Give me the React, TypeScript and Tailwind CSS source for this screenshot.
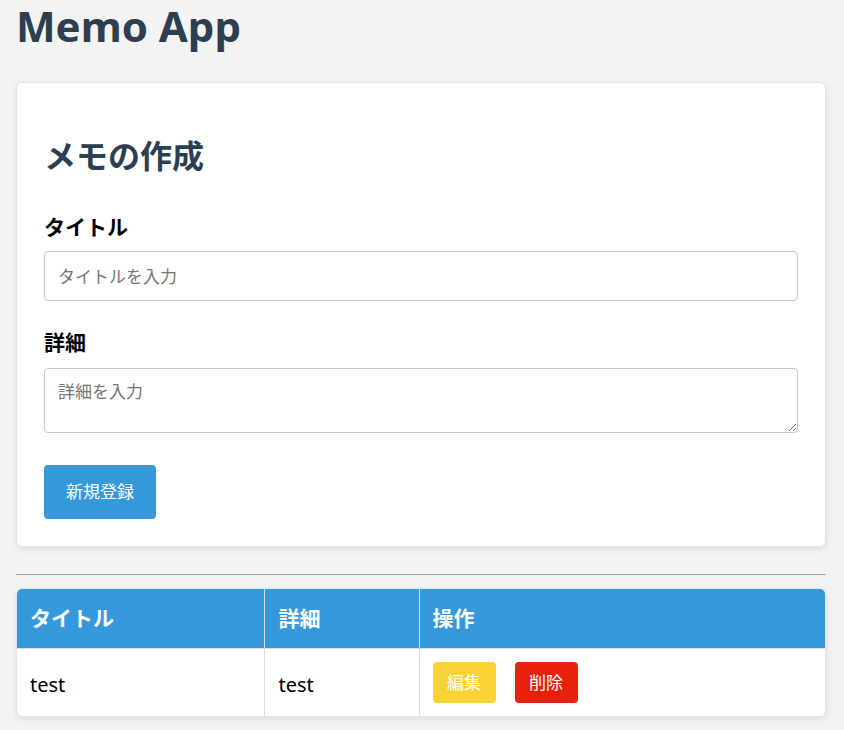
import React, { useState } from "react";

type Memo = { title: string; detail: string };

const font = { fontFamily: '"Noto Sans", "Noto Sans CJK JP", sans-serif' };

export default function App() {
    const [memos] = useState<Memo[]>([{ title: "test", detail: "test" }]);

    return (
        <div className="min-h-[730px] bg-[#f3f3f3] pb-10" style={font}>
            <div className="w-[810px] ml-4">
                <h1 className="text-[42px] leading-[52px] font-bold text-[#2c3e50] mb-[30px]">Memo App</h1>

                {/* create form */}
                <div className="bg-white border border-[#e4e4e4] rounded-md shadow-[0_2px_6px_rgba(0,0,0,0.1)] px-[27px] pt-[54px] pb-[27px]">
                    <h2 className="text-[32px] leading-[38px] font-bold text-[#2c3e50] mb-[38px]">メモの作成</h2>

                    <label className="block text-[21px] leading-[28px] font-bold text-black mb-[10px]">タイトル</label>
                    <input
                        type="text"
                        placeholder="タイトルを入力"
                        className="block w-full h-[50px] border border-[#c8c8c8] rounded px-[13px] text-[17px] text-black placeholder:text-[#757575] outline-none"
                    />

                    <label className="block text-[21px] leading-[28px] font-bold text-black mt-[27px] mb-[12px]">詳細</label>
                    <textarea
                        placeholder="詳細を入力"
                        className="block w-full h-[65px] border border-[#c8c8c8] rounded px-[13px] pt-[10px] text-[17px] text-black placeholder:text-[#757575] outline-none"
                    />

                    <button className="mt-[32px] h-[54px] w-[112px] bg-[#3498db] text-white text-[17px] rounded">新規登録</button>
                </div>

                <hr className="mt-[27px] mb-[13px] border-0 border-t border-[#a3a3a3]" />

                {/* memo list */}
                <div className="bg-white border border-[#e4e4e4] rounded-md shadow-[0_2px_6px_rgba(0,0,0,0.1)] overflow-hidden">
                    <table className="w-full table-fixed border-collapse">
                        <colgroup>
                            <col className="w-[247px]" />
                            <col className="w-[155px]" />
                            <col />
                        </colgroup>
                        <thead>
                            <tr className="bg-[#3498db] h-[59px]">
                                <th className="text-left text-white text-[21px] font-bold px-[13px] border-r border-[#dcdcdc]">タイトル</th>
                                <th className="text-left text-white text-[21px] font-bold px-[14px] border-r border-[#dcdcdc]">詳細</th>
                                <th className="text-left text-white text-[21px] font-bold px-[13px]">操作</th>
                            </tr>
                        </thead>
                        <tbody>
                            {memos.map((m, i) => (
                                <tr key={i} className="h-[68px] border-t border-[#dcdcdc]">
                                    <td className="px-[13px] pt-[6px] text-[20px] text-black border-r border-[#dcdcdc]">{m.title}</td>
                                    <td className="px-[14px] pt-[6px] text-[20px] text-black border-r border-[#dcdcdc]">{m.detail}</td>
                                    <td className="px-[13px]">
                                        <div className="flex gap-[19px]">
                                            <button className="h-[41px] w-[63px] bg-[#f9d336] text-white text-[17px] rounded">編集</button>
                                            <button className="h-[41px] w-[63px] bg-[#e8210e] text-white text-[17px] rounded">削除</button>
                                        </div>
                                    </td>
                                </tr>
                            ))}
                        </tbody>
                    </table>
                </div>
            </div>
        </div>
    );
}
